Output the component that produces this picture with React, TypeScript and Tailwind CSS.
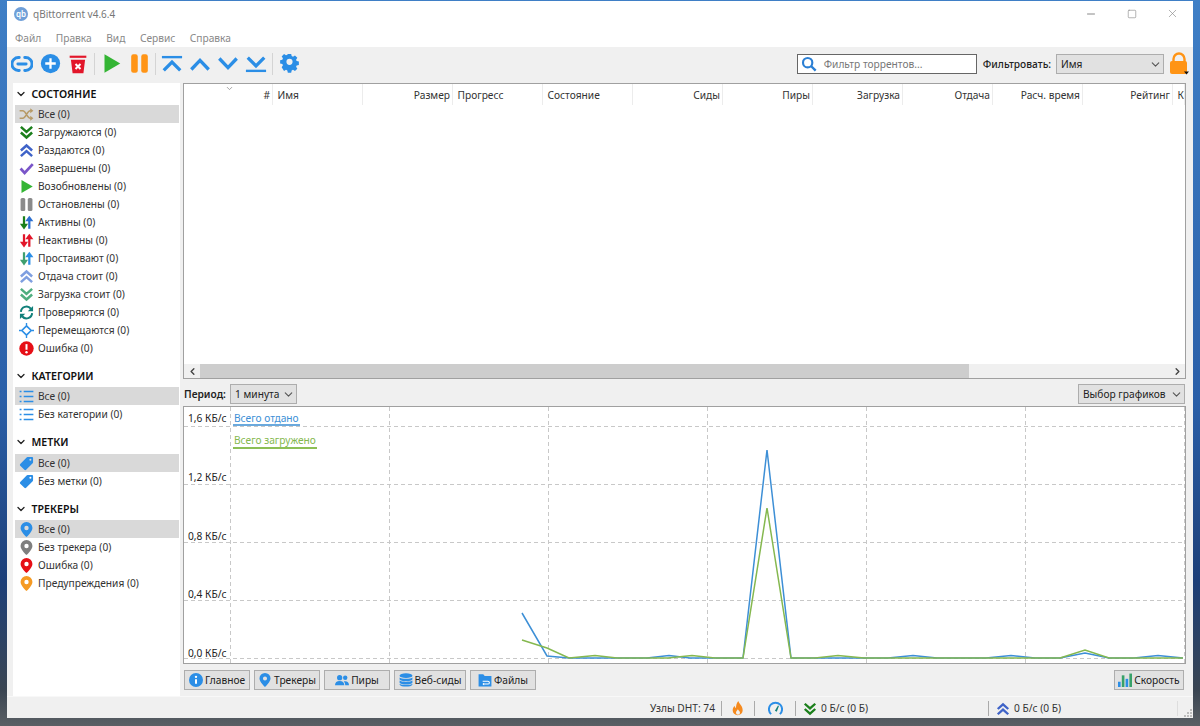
import React from "react";
import { ChevronDown, ChevronLeft, ChevronRight, Minus, Square, X } from "lucide-react";

type IP = { size?: number; color?: string };

const Svg = ({ size = 15, children }: { size?: number; children: React.ReactNode }) => (
  <svg width={size} height={size} viewBox="0 0 24 24" fill="none" className="shrink-0">{children}</svg>
);

const LinkIcon = ({ size = 22 }: IP) => (
  <Svg size={size}>
    <path d="M9 5H8a7 7 0 0 0 0 14h1M15 5h1a7 7 0 0 1 0 14h-1" stroke="#2b8ee6" strokeWidth="3.2" strokeLinecap="round" />
    <path d="M7.5 12h9" stroke="#2b8ee6" strokeWidth="3.2" strokeLinecap="round" />
  </Svg>
);
const PlusIcon = ({ size = 22 }: IP) => (
  <Svg size={size}>
    <circle cx="12" cy="12" r="11" fill="#2b8ee6" />
    <path d="M12 6v12M6 12h12" stroke="#fff" strokeWidth="2.6" />
  </Svg>
);
const TrashIcon = ({ size = 22 }: IP) => (
  <Svg size={size}>
    <path d="M2 2h20v2.6H2z" fill="#e2162a" />
    <path d="M3.5 7h17l-2 16h-13z" fill="#e2162a" />
    <path d="M9 12l6 6M15 12l-6 6" stroke="#fff" strokeWidth="2.4" />
  </Svg>
);
const Play = ({ size = 22, color = "#34b534" }: IP) => (
  <Svg size={size}><path d="M4 1.5 22 12 4 22.5z" fill={color} /></Svg>
);
const Pause = ({ size = 22, color = "#ff9415" }: IP) => (
  <Svg size={size}>
    <rect x="2.5" y="1.5" width="7.5" height="21" rx="2.5" fill={color} />
    <rect x="14" y="1.5" width="7.5" height="21" rx="2.5" fill={color} />
  </Svg>
);
const Chev = ({ size = 22, up = false, bar = false }: IP & { up?: boolean; bar?: boolean }) => (
  <Svg size={size}>
    {up ? (
      <>
        <path d={bar ? "M3 19l9-9 9 9" : "M2.5 18 12 8l9.5 10"} stroke="#2b8ee6" strokeWidth="3.6" />
        {bar && <path d="M1 4.5h22" stroke="#2b8ee6" strokeWidth="2.6" />}
      </>
    ) : (
      <>
        <path d={bar ? "M3 5l9 9 9-9" : "M2.5 6 12 16l9.5-10"} stroke="#2b8ee6" strokeWidth="3.6" />
        {bar && <path d="M1 19.5h22" stroke="#2b8ee6" strokeWidth="2.6" />}
      </>
    )}
  </Svg>
);
const Gear = ({ size = 22 }: IP) => (
  <Svg size={size}>
    <path fillRule="evenodd" clipRule="evenodd" fill="#2b8ee6" d="M9.6 1h4.8l.7 3.2 1.9.8 2.8-1.8 3.4 3.4-1.8 2.8.8 1.9 3.2.7v4.8l-3.2.7-.8 1.9 1.8 2.8-3.4 3.4-2.8-1.8-1.9.8-.7 3.2H9.6l-.7-3.2-1.9-.8-2.8 1.8L.8 20.2l1.8-2.8-.8-1.9L-1.4 14.8V10l3.2-.7.8-1.9L.8 4.6 4.2 1.2 7 3l1.9-.8zM12 8a4.4 4.4 0 1 0 0 8.8A4.4 4.4 0 0 0 12 8z" transform="translate(2.4 0.2) scale(.8)" />
  </Svg>
);
const DoubleChev = ({ size = 15, color = "#1b7f1b", up = false }: IP & { up?: boolean }) => (
  <Svg size={size}>
    {up ? (
      <path d="M3 12l9-8 9 8M3 21l9-8 9 8" stroke={color} strokeWidth="4" />
    ) : (
      <path d="M3 3l9 8 9-8M3 12l9 8 9-8" stroke={color} strokeWidth="4" />
    )}
  </Svg>
);
const Shuffle = ({ size = 15 }: IP) => (
  <Svg size={size}>
    <path d="M1 6h5c5 0 7 12 12 12h2M1 18h5c5 0 7-12 12-12h2" stroke="#b79a67" strokeWidth="2.4" />
    <path d="M18 2l5 4-5 4zM18 14l5 4-5 4z" fill="#b79a67" />
  </Svg>
);
const Check = ({ size = 15 }: IP) => (
  <Svg size={size}><path d="M2.5 12l6.5 7L22 5" stroke="#7a55c9" strokeWidth="4.4" /></Svg>
);
const Arrows = ({ size = 15, a = "#1b7f1b", b = "#2b6fd0" }: IP & { a?: string; b?: string }) => (
  <Svg size={size}>
    <path d="M8 2v16" stroke={a} strokeWidth="3.6" />
    <path d="M1.5 14h13L8 23z" fill={a} />
    <path d="M16.5 22V6" stroke={b} strokeWidth="3.6" />
    <path d="M10 10h13L16.5 1z" fill={b} />
  </Svg>
);
const Refresh = ({ size = 15 }: IP) => (
  <Svg size={size}>
    <path d="M3 11a9 9 0 0 1 16-5" stroke="#11807a" strokeWidth="3.2" />
    <path d="M21 13a9 9 0 0 1-16 5" stroke="#11807a" strokeWidth="3.2" />
    <path d="M22.5 1.5V10h-8.5zM1.5 22.5V14H10z" fill="#11807a" />
  </Svg>
);
const Diamond = ({ size = 15 }: IP) => (
  <Svg size={size}>
    <path d="M12 4.5 19.5 12 12 19.5 4.5 12z" stroke="#2b8ee6" strokeWidth="2.6" />
    <path d="M12 0v4M12 20v4M0 12h4M20 12h4" stroke="#2b8ee6" strokeWidth="2.2" />
  </Svg>
);
const Alert = ({ size = 15 }: IP) => (
  <Svg size={size}>
    <circle cx="12" cy="12" r="11.5" fill="#e60f16" />
    <path d="M12 5v9" stroke="#fff" strokeWidth="3.2" />
    <circle cx="12" cy="18" r="1.9" fill="#fff" />
  </Svg>
);
const ListIcon = ({ size = 15 }: IP) => (
  <Svg size={size}>
    <path d="M1 4h3M1 12h3M1 20h3M7.5 4H23M7.5 12H23M7.5 20H23" stroke="#2b8ee6" strokeWidth="2.6" />
  </Svg>
);
const Tag = ({ size = 15 }: IP) => (
  <Svg size={size}>
    <path fillRule="evenodd" d="M14 1.5h7a1.5 1.5 0 0 1 1.5 1.5v7a2 2 0 0 1-.6 1.4L11.4 22a2 2 0 0 1-2.8 0L2 15.4a2 2 0 0 1 0-2.8L12.6 2.1a2 2 0 0 1 1.4-.6zM18.2 4.2a1.6 1.6 0 1 0 0 3.2 1.6 1.6 0 0 0 0-3.2z" fill="#2b8ee6" />
  </Svg>
);
const Pin = ({ size = 15, color = "#2b8ee6" }: IP) => (
  <Svg size={size}>
    <path fillRule="evenodd" d="M12 0a9.5 9.5 0 0 1 9.5 9.5C21.5 15.5 12 24 12 24S2.5 15.5 2.5 9.5A9.5 9.5 0 0 1 12 0zm0 6a3.5 3.5 0 1 0 0 7 3.5 3.5 0 0 0 0-7z" fill={color} />
  </Svg>
);
const InfoIcon = ({ size = 14 }: IP) => (
  <Svg size={size}>
    <circle cx="12" cy="12" r="12" fill="#2b8ee6" />
    <circle cx="12" cy="6.5" r="2" fill="#fff" />
    <path d="M12 10.5v8" stroke="#fff" strokeWidth="3.4" />
  </Svg>
);
const People = ({ size = 14 }: IP) => (
  <Svg size={size}>
    <circle cx="8" cy="8" r="4.5" fill="#2b8ee6" />
    <circle cx="17.5" cy="8" r="3.8" fill="#2b8ee6" />
    <path d="M0 21c0-5 3-7.5 8-7.5s8 2.5 8 7.5zM17.5 21h6.5c0-4.5-2.5-7-6.5-7-1 0-1.8.1-2.5.4 1.6 1.5 2.5 3.5 2.5 6.6z" fill="#2b8ee6" />
  </Svg>
);
const Db = ({ size = 14 }: IP) => (
  <Svg size={size}>
    <ellipse cx="12" cy="4.5" rx="11" ry="4.2" fill="#2b8ee6" />
    <path d="M1 7.5c2 3 20 3 22 0v3.5c-2 4-20 4-22 0zM1 13c2 3 20 3 22 0v3.5c-2 4-20 4-22 0zM1 18.5c2 3 20 3 22 0v1c-2 5-20 5-22 0z" fill="#2b8ee6" />
  </Svg>
);
const FileIcon = ({ size = 14 }: IP) => (
  <Svg size={size}>
    <path d="M1 2h8l2.5 3H23v18H1z" fill="#2b8ee6" />
    <path d="M8 14h9a2.5 2.5 0 0 1 0 5H9" stroke="#fff" strokeWidth="1.8" />
    <path d="M10.5 16.5 7.5 19l3 2.5z" fill="#fff" />
  </Svg>
);
const Bars = ({ size = 14 }: IP) => (
  <Svg size={size}>
    <rect x="0" y="15" width="4.5" height="9" fill="#2b8ee6" />
    <rect x="6.5" y="4" width="4.5" height="20" fill="#38a169" />
    <rect x="13" y="10" width="4.5" height="14" fill="#2b8ee6" />
    <rect x="19.5" y="1" width="4.5" height="23" fill="#38a169" />
  </Svg>
);
const Flame = ({ size = 16 }: IP) => (
  <Svg size={size}>
    <path fillRule="evenodd" d="M12.5 0c1 4 6.5 7 6.5 14a7.5 7.5 0 0 1-15 0c0-3 1.3-5 3-7 .2 2 1 3 2 3.5C9 7 10 3 12.5 0zM11.8 12.5C10.5 14.5 9 15.5 9 17.5a3 3 0 0 0 6 0c0-2-2-3-3.2-5z" fill="#f58a1f" />
  </Svg>
);
const GaugeIcon = ({ size = 15 }: IP) => (
  <Svg size={size}>
    <path d="M5 21a10.5 10.5 0 1 1 14 0" stroke="#2b8ee6" strokeWidth="3.2" />
    <path d="M11 15.5 16 7l1.5 1-3.5 9z" fill="#11807a" />
  </Svg>
);
const SearchIcon = () => (
  <Svg size={16}>
    <circle cx="10" cy="10" r="7" stroke="#2b7fd4" strokeWidth="3.2" />
    <path d="M15 15l7 7" stroke="#2b7fd4" strokeWidth="3.6" />
  </Svg>
);
const Lock = () => (
  <svg width="20" height="24" viewBox="0 0 20 24" className="shrink-0">
    <path d="M4.5 10V7a5.5 5.5 0 0 1 11 0v3" fill="none" stroke="#ff9415" strokeWidth="2.4" />
    <rect x="1" y="9" width="17" height="13" rx="2" fill="#ff9415" />
    <path d="M15 19.5h5l-2.5 3z" fill="#111" />
  </svg>
);
const Grip = () => (
  <svg width="10" height="10" viewBox="0 0 10 10" className="shrink-0">
    <path d="M7 1h2v2H7zM4 4h2v2H4zM7 4h2v2H7zM1 7h2v2H1zM4 7h2v2H4zM7 7h2v2H7z" fill="#bdbdbd" />
  </svg>
);

const Sep = () => <div className="h-[22px] w-px bg-[#d4d4d4] mx-[2px]" />;

const ToolBtn = ({ children }: { children: React.ReactNode }) => (
  <div className="w-[28px] flex justify-center">{children}</div>
);

const Row = ({ icon, label, active = false }: { icon: React.ReactNode; label: string; active?: boolean }) => (
  <div className={`h-[18px] flex items-center pl-[3.5px] ${active ? "bg-[#d9d9d9]" : ""}`}>
    <div className="w-[19.5px] flex justify-start">{icon}</div>
    <span className="whitespace-nowrap">{label}</span>
  </div>
);

const Head = ({ title, className = "" }: { title: string; className?: string }) => (
  <div className={`h-[22px] flex items-center text-[#111] ${className}`}>
    <ChevronDown size={12} strokeWidth={2.6} className="mr-[4.5px] text-[#222]" />
    <span className="font-semibold uppercase text-[10.6px]">{title}</span>
  </div>
);

const Col = ({ label, w, right = false }: { label: string; w: string; right?: boolean }) => (
  <div className={`${w} shrink-0 border-r border-[#ececec] h-full flex items-center pt-[2px] pl-[4.5px] pr-[2px] whitespace-nowrap overflow-hidden ${right ? "justify-end" : "justify-start"}`}>
    {label}
  </div>
);

const Tab = ({ icon, label, w }: { icon: React.ReactNode; label: string; w: string }) => (
  <div className={`${w} h-[20px] bg-[#e1e1e1] border border-[#adadad] flex items-center justify-center gap-[2px] text-[#222] whitespace-nowrap`}>
    {icon}
    <span>{label}</span>
  </div>
);

const Combo = ({ label, w, className = "" }: { label: string; w: string; className?: string }) => (
  <div className={`${w} h-[20px] bg-[#e1e1e1] border border-[#adadad] flex items-center justify-between pl-[4px] pr-[1.5px] text-[#222] whitespace-nowrap ${className}`}>
    <span>{label}</span>
    <ChevronDown size={13} className="text-[#555]" />
  </div>
);

const Y_GRID = [426.5, 484.5, 542.5, 600.5, 658.5];
const X_GRID = [230.5, 389.5, 548.5, 707.5, 866.5, 1025.5, 1184.5];
const Y_LABELS: [string, number][] = [
  ["1,6 КБ/с", 418],
  ["1,2 КБ/с", 476.5],
  ["0,8 КБ/с", 535.5],
  ["0,4 КБ/с", 593.5],
  ["0,0 КБ/с", 652.5],
];

const BLUE = "522,613 547,656 569,658 595,658 617,658 647,658 669,655.5 690,658 743,658 767,450 791,658 815,658 840,658 864,658 888,658 913,655.5 937,658 986,658 1011,655.5 1035,658 1060,658 1085,653 1109,658 1134,658 1158,655.5 1183,658";
const GREEN = "522,640 547,648 569,658 595,655.5 617,658 668,658 692,655.5 715,658 743,658 767,508 791,658 815,658 838,655.5 864,658 1060,658 1085,650 1109,658 1183,658";

export default function App() {
  return (
    <div
      className="w-[1200px] h-[726px] overflow-hidden pt-px pl-[7px] pr-[7px] pb-[8px] bg-[linear-gradient(180deg,#3f7fc6_0%,#2a5fa8_55%,#1d3f78_80%,#3a4552_95%,#5a5f64_100%)] text-[#333] text-[10.2px] leading-none"
      style={{ fontFamily: '"Noto Sans", "Open Sans", sans-serif' }}
    >
      <div className="h-full flex flex-col bg-[#f0f0f0]">
        <div className="h-[25px] shrink-0 bg-white flex items-center pl-[7px]">
          <div className="w-[14px] h-[14px] rounded-full bg-[#6f9fd8] text-white text-[8px] font-semibold flex items-center justify-center">qb</div>
          <span className="ml-[5px] text-[10px] text-[#777]">qBittorrent v4.6.4</span>
          <div className="ml-auto flex items-center text-[#888]">
            <div className="w-[41px] flex justify-center"><Minus size={12} /></div>
            <div className="w-[41px] flex justify-center"><Square size={10} strokeWidth={1.5} /></div>
            <div className="w-[41px] flex justify-center"><X size={13} strokeWidth={1.2} /></div>
          </div>
        </div>
        <div className="h-[21px] shrink-0 bg-white flex items-center pt-[3px] pl-[8px] gap-[14.5px] text-[#888]">
          <span>Файл</span>
          <span>Правка</span>
          <span>Вид</span>
          <span>Сервис</span>
          <span>Справка</span>
        </div>
        <div className="h-[33px] shrink-0 flex items-center pl-px pr-[4px]">
          <ToolBtn><LinkIcon /></ToolBtn>
          <ToolBtn><PlusIcon size={21} /></ToolBtn>
          <ToolBtn><TrashIcon size={20} /></ToolBtn>
          <Sep />
          <ToolBtn><Play size={21} /></ToolBtn>
          <ToolBtn><Pause size={21} /></ToolBtn>
          <Sep />
          <ToolBtn><Chev up bar /></ToolBtn>
          <ToolBtn><Chev up /></ToolBtn>
          <ToolBtn><Chev /></ToolBtn>
          <ToolBtn><Chev bar /></ToolBtn>
          <Sep />
          <ToolBtn><Gear size={21} /></ToolBtn>
          <div className="ml-auto w-[180px] h-[20px] bg-white border border-[#666] flex items-center pl-[3px] gap-[7px] text-[#777]">
            <SearchIcon />
            <span className="pt-px">Фильтр торрентов...</span>
          </div>
          <span className="ml-[6px] mr-[5px] pt-px text-[#222] font-medium whitespace-nowrap">Фильтровать:</span>
          <Combo label="Имя" w="w-[108px]" className="pt-px" />
          <div className="ml-[5px] w-[20px]"><Lock /></div>
        </div>

        <div className="flex-1 min-h-0 flex pl-[6px] pr-[7px] pt-[3px]">
          <div className="w-[167px] shrink-0 bg-white pl-[2px] pr-px">
            <Head title="СОСТОЯНИЕ" />
            <Row active icon={<Shuffle />} label="Все (0)" />
            <Row icon={<DoubleChev />} label="Загружаются (0)" />
            <Row icon={<DoubleChev up color="#3f63c8" />} label="Раздаются (0)" />
            <Row icon={<Check />} label="Завершены (0)" />
            <Row icon={<Play size={15} />} label="Возобновлены (0)" />
            <Row icon={<Pause size={15} color="#8a8a8a" />} label="Остановлены (0)" />
            <Row icon={<Arrows />} label="Активны (0)" />
            <Row icon={<Arrows a="#e2162a" b="#e2162a" />} label="Неактивны (0)" />
            <Row icon={<Arrows a="#3f9f6f" b="#2b8ee6" />} label="Простаивают (0)" />
            <Row icon={<DoubleChev up color="#7f9fe0" />} label="Отдача стоит (0)" />
            <Row icon={<DoubleChev color="#4fae7f" />} label="Загрузка стоит (0)" />
            <Row icon={<Refresh />} label="Проверяются (0)" />
            <Row icon={<Diamond />} label="Перемещаются (0)" />
            <Row icon={<Alert />} label="Ошибка (0)" />
            <Head title="КАТЕГОРИИ" className="mt-[8px]" />
            <Row active icon={<ListIcon />} label="Все (0)" />
            <Row icon={<ListIcon />} label="Без категории (0)" />
            <Head title="МЕТКИ" className="mt-[8px] mb-px" />
            <Row active icon={<Tag />} label="Все (0)" />
            <Row icon={<Tag />} label="Без метки (0)" />
            <Head title="ТРЕКЕРЫ" className="mt-[8px]" />
            <Row active icon={<Pin />} label="Все (0)" />
            <Row icon={<Pin color="#7f7f7f" />} label="Без трекера (0)" />
            <Row icon={<Pin color="#e60f16" />} label="Ошибка (0)" />
            <Row icon={<Pin color="#f59a23" />} label="Предупреждения (0)" />
          </div>

          <div className="ml-[3px] flex-1 min-w-0 flex flex-col">
            <div className="h-[296px] shrink-0 bg-white border border-[#a0a0a0] flex flex-col relative">
              <div className="absolute left-[41px] top-0 text-[#888]"><ChevronDown size={9} /></div>
              <div className="h-[21px] shrink-0 flex items-center text-[#333] overflow-hidden">
                <Col label="#" w="w-[89px]" right />
                <Col label="Имя" w="w-[90px]" />
                <Col label="Размер" w="w-[90px]" right />
                <Col label="Прогресс" w="w-[90px]" />
                <Col label="Состояние" w="w-[90px]" />
                <Col label="Сиды" w="w-[90px]" right />
                <Col label="Пиры" w="w-[90px]" right />
                <Col label="Загрузка" w="w-[90px]" right />
                <Col label="Отдача" w="w-[90px]" right />
                <Col label="Расч. время" w="w-[90px]" right />
                <Col label="Рейтинг" w="w-[90px]" right />
                <Col label="К" w="w-[12px]" />
              </div>
              <div className="flex-1" />
              <div className="h-[14px] shrink-0 bg-[#f0f0f0] flex items-center">
                <div className="w-[16px] flex justify-center text-[#444]"><ChevronLeft size={11} strokeWidth={3} /></div>
                <div className="w-[769px] h-full bg-[#cdcdcd]" />
                <div className="ml-auto w-[16px] flex justify-center text-[#444]"><ChevronRight size={11} strokeWidth={3} /></div>
              </div>
            </div>

            <div className="h-[20px] mt-[5px] shrink-0 flex items-center">
              <span className="w-[47px] font-semibold text-[#222] pl-px whitespace-nowrap">Период:</span>
              <Combo label="1 минута" w="w-[67px]" />
              <Combo label="Выбор графиков" w="w-[107px]" className="ml-auto mr-px" />
            </div>

            <div className="h-[258px] mt-[2px] shrink-0 bg-white border border-[#a0a0a0] relative overflow-hidden">
              <svg width="1002" height="256" viewBox="184 407 1002 256" className="absolute left-0 top-0">
                {Y_GRID.map((y) => (
                  <line key={y} x1="184" x2="1186" y1={y} y2={y} stroke="#c8c8c8" strokeWidth="1" strokeDasharray="4 3" />
                ))}
                {X_GRID.map((x) => (
                  <line key={x} x1={x} x2={x} y1="407" y2="663" stroke="#c8c8c8" strokeWidth="1" strokeDasharray="4 3" />
                ))}
                <polyline points={BLUE} fill="none" stroke="#3d8fd6" strokeWidth="1.5" />
                <polyline points={GREEN} fill="none" stroke="#85b84f" strokeWidth="1.5" />
              </svg>
              {Y_LABELS.map(([t, y]) => (
                <span key={t} className="absolute left-[4px] whitespace-nowrap text-[#222]" style={{ top: y - 412 }}>{t}</span>
              ))}
              <span className="absolute left-[50px] top-[6px] pb-px px-px -ml-px border-b-2 border-[#6aa9dd] text-[#3d8fd6] whitespace-nowrap">Всего отдано</span>
              <span className="absolute left-[50px] top-[28px] pb-[2px] px-px -ml-px border-b-2 border-[#8cbf55] text-[#85b84f] whitespace-nowrap">Всего загружено</span>
            </div>

            <div className="h-[20px] mt-[6px] shrink-0 flex items-center">
              <div className="flex gap-[4px] ml-px">
                <Tab w="w-[66px]" icon={<InfoIcon />} label="Главное" />
                <Tab w="w-[66px]" icon={<Pin size={14} />} label="Трекеры" />
                <Tab w="w-[66px]" icon={<People />} label="Пиры" />
                <Tab w="w-[72px]" icon={<Db />} label="Веб-сиды" />
                <Tab w="w-[66px]" icon={<FileIcon />} label="Файлы" />
              </div>
              <div className="ml-auto mr-[2px]">
                <Tab w="w-[70px]" icon={<Bars />} label="Скорость" />
              </div>
            </div>
          </div>
        </div>

        <div className="h-[22px] shrink-0 pt-[2px] border-t border-[#f8f8f8] flex items-center text-[#333] whitespace-nowrap">
          <div className="w-[714px] pr-[6px] flex justify-end">Узлы DHT: 74</div>
          <div className="w-px h-[15px] bg-[#aaa]" />
          <div className="w-[32px] flex justify-center"><Flame /></div>
          <div className="w-px h-[15px] bg-[#aaa]" />
          <div className="w-[40px] flex justify-center"><GaugeIcon /></div>
          <div className="w-px h-[15px] bg-[#aaa]" />
          <div className="w-[192px] flex items-center gap-[4px] pl-[7px]"><DoubleChev size={14} />0 Б/с (0 Б)</div>
          <div className="w-px h-[15px] bg-[#aaa]" />
          <div className="w-[188px] flex items-center gap-[4px] pl-[7px]"><DoubleChev size={14} up color="#3f63c8" />0 Б/с (0 Б)</div>
          <div className="w-px h-[15px] bg-[#ddd]" />
          <div className="ml-auto self-end"><Grip /></div>
        </div>
      </div>
    </div>
  );
}
